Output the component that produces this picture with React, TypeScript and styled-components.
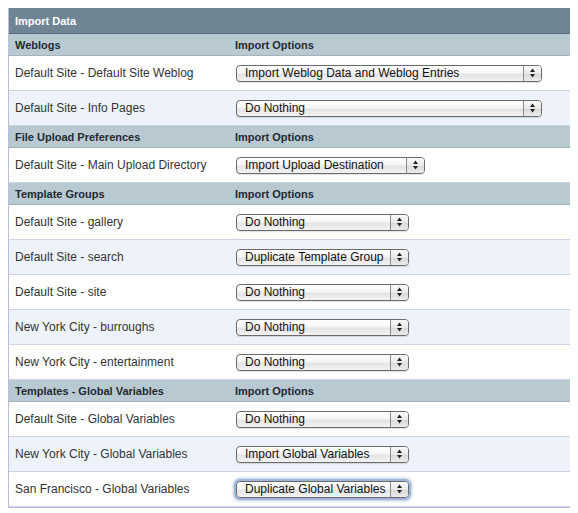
import React from 'react';
import styled, { createGlobalStyle } from 'styled-components';

const GlobalStyle = createGlobalStyle`
  body {
    margin: 8px;
    background: #fff;
    font-family: "Liberation Sans", Arial, sans-serif;
  }
`;

const Table = styled.div`
  width: 561px;
  border: 1px solid #b9bfd9;
  border-top: none;
  color: #333;
`;

const TitleBar = styled.div`
  height: 25px;
  display: flex;
  align-items: center;
  padding: 0 6px;
  background: #6f8594;
  border-bottom: 1px solid #56697a;
  color: #fff;
  font-size: 11px;
  font-weight: bold;
`;

const Grid = styled.div<{ $head?: boolean; $alt?: boolean }>`
  display: grid;
  grid-template-columns: 220px 1fr;
  align-items: center;
  height: ${(p) => (p.$head ? '21px' : '34px')};
  background: ${(p) => (p.$head ? '#b9c9d1' : p.$alt ? '#eef3fb' : '#fff')};
  border-bottom: 1px solid ${(p) => (p.$head ? '#a3b3bc' : '#cdd3e4')};
  font-size: ${(p) => (p.$head ? '11px' : '12px')};
  font-weight: ${(p) => (p.$head ? 'bold' : 'normal')};
  color: ${(p) => (p.$head ? '#1e2a33' : '#333')};
`;

const Cell = styled.div`
  padding: 0 6px;
  white-space: nowrap;
`;

const SelectWrap = styled.div<{ $focus?: boolean }>`
  position: relative;
  margin-left: 1px;
  height: 17px;
  border: 1px solid #6b6b6b;
  border-radius: 4px;
  background: linear-gradient(#ffffff 0%, #f6f6f6 45%, #e4e4e4 55%, #f2f2f2 100%);
  box-shadow: ${(p) =>
    p.$focus ? '0 0 0 2px #9fb6d8, 0 0 3px 3px #b8c9e4' : '0 1px 1px rgba(0,0,0,0.12)'};
  box-sizing: border-box;
`;

const NativeSelect = styled.select`
  appearance: none;
  border: none;
  background: transparent;
  width: 100%;
  height: 100%;
  padding: 0 22px 0 8px;
  font-family: "Liberation Sans", Arial, sans-serif;
  font-size: 12px;
  color: #111;
  outline: none;
  display: block;
`;

const Stepper = styled.span`
  position: absolute;
  top: 0;
  right: 0;
  bottom: 0;
  width: 17px;
  border-left: 1px solid #8a8a8a;
  border-radius: 0 3px 3px 0;
  background: linear-gradient(#fafafa 0%, #e9e9e9 50%, #d8d8d8 51%, #ececec 100%);
  display: flex;
  align-items: center;
  justify-content: center;
  pointer-events: none;
`;

const Arrows = () => (
  <svg width="7" height="10" viewBox="0 0 7 10">
    <path d="M3.5 0.5 L6 4 L1 4 Z" fill="#222" />
    <path d="M3.5 9.5 L6 6 L1 6 Z" fill="#222" />
  </svg>
);

type Row = { label: string; value: string; width: number; focus?: boolean };
type Section = { title: string; rows: Row[] };

const sections: Section[] = [
  {
    title: 'Weblogs',
    rows: [
      { label: 'Default Site - Default Site Weblog', value: 'Import Weblog Data and Weblog Entries', width: 306 },
      { label: 'Default Site - Info Pages', value: 'Do Nothing', width: 306 },
    ],
  },
  {
    title: 'File Upload Preferences',
    rows: [{ label: 'Default Site - Main Upload Directory', value: 'Import Upload Destination', width: 189 }],
  },
  {
    title: 'Template Groups',
    rows: [
      { label: 'Default Site - gallery', value: 'Do Nothing', width: 173 },
      { label: 'Default Site - search', value: 'Duplicate Template Group', width: 173 },
      { label: 'Default Site - site', value: 'Do Nothing', width: 173 },
      { label: 'New York City - burroughs', value: 'Do Nothing', width: 173 },
      { label: 'New York City - entertainment', value: 'Do Nothing', width: 173 },
    ],
  },
  {
    title: 'Templates - Global Variables',
    rows: [
      { label: 'Default Site - Global Variables', value: 'Do Nothing', width: 173 },
      { label: 'New York City - Global Variables', value: 'Import Global Variables', width: 173 },
      { label: 'San Francisco - Global Variables', value: 'Duplicate Global Variables', width: 173, focus: true },
    ],
  },
];

const App: React.FC = () => {
  return (
    <>
      <GlobalStyle />
      <Table>
        <TitleBar>Import Data</TitleBar>
        {sections.map((s) => (
          <React.Fragment key={s.title}>
            <Grid $head>
              <Cell>{s.title}</Cell>
              <Cell>Import Options</Cell>
            </Grid>
            {s.rows.map((r, i) => (
              <Grid key={r.label} $alt={i % 2 === 1}>
                <Cell>{r.label}</Cell>
                <Cell>
                  <SelectWrap $focus={r.focus} style={{ width: r.width }}>
                    <NativeSelect defaultValue={r.value}>
                      <option>{r.value}</option>
                    </NativeSelect>
                    <Stepper>
                      <Arrows />
                    </Stepper>
                  </SelectWrap>
                </Cell>
              </Grid>
            ))}
          </React.Fragment>
        ))}
      </Table>
    </>
  );
};

export default App;
